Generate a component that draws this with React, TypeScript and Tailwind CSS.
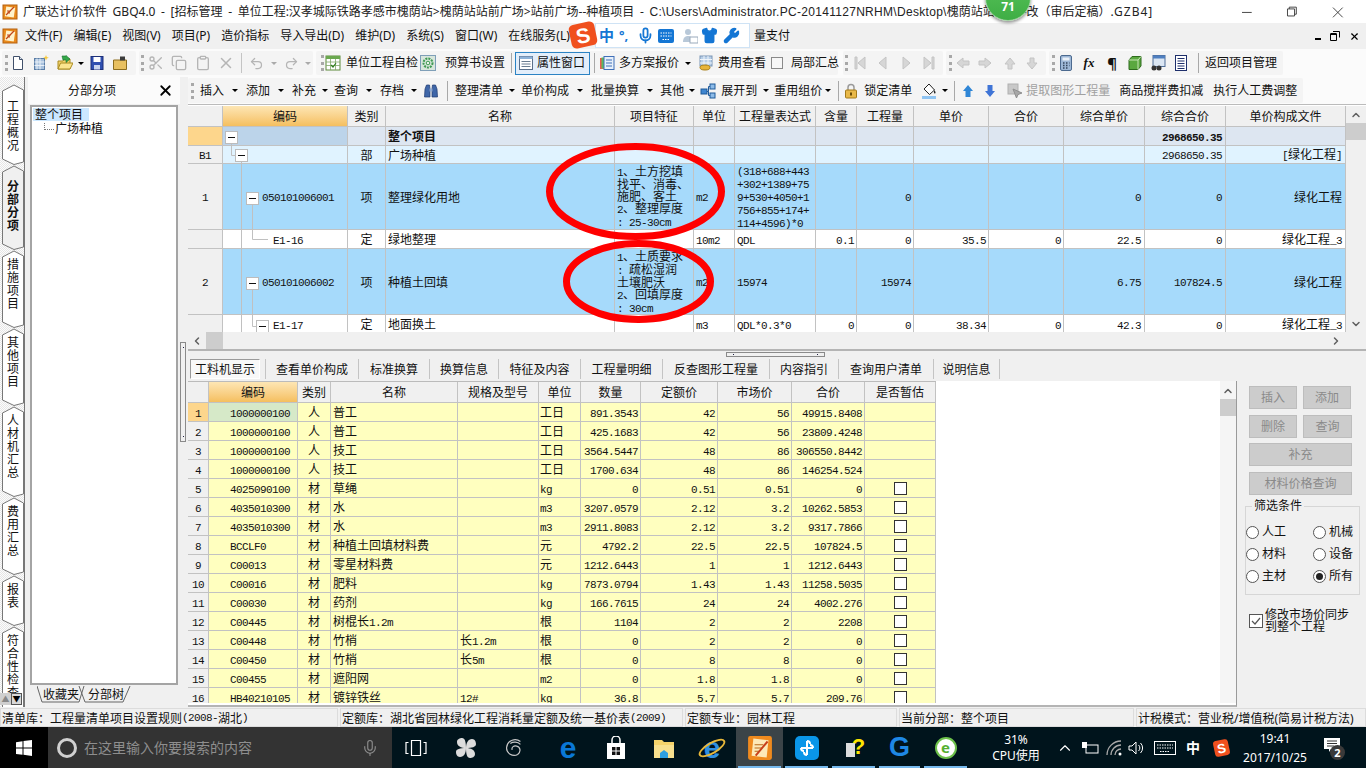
import { ChevronDown, ChevronLeft, ChevronRight, ChevronUp, Copy, Clipboard, Mic, Redo2, Scissors, Undo2, Wrench, Shirt, X } from "lucide-react";

const UPPER_COLS = "grid grid-cols-[35px_125px_38px_229px_79px_41px_81px_41px_57px_75px_75px_81px_81px_120px]";
const LOWER_COLS = "grid grid-cols-[21px_89px_33px_127px_81px_42px_60px_77px_74px_73px_71px]";
const LINE = "border-r border-b border-[#c2c2c2]";
const MONO = "font-['Liberation_Mono',monospace] text-[11px] tracking-[-0.6px]";

// digits and latin letters are narrower than the CJK glyphs in the original grid
function T({ s }: { s: string }) {
  return (
    <>
      {s.split(/([\x20-\x7e]+)/).map((p, i) =>
        /[\x20-\x7e]/.test(p) ? (
          <span key={i} className={MONO}>
            {p}
          </span>
        ) : (
          p
        )
      )}
    </>
  );
}

const upperAlign = ["justify-center", "justify-start", "justify-center", "justify-start", "justify-start", "justify-start", "justify-start", "justify-end pr-[2px]", "justify-end pr-[2px]", "justify-end pr-[2px]", "justify-end pr-[2px]", "justify-end pr-[3px]", "justify-end pr-[3px]", "justify-end pr-[3px]"];

const upperRows = [
  { h: "h-[19px]", bg: "bg-[#dde6f1]", head: "bg-[#fdd68c]", code: "bg-[#bcd4ea]", bold: true, cells: ["", "", "", "整个项目", "", "", "", "", "", "", "", "", "2968650.35", ""] },
  { h: "h-[18px]", bg: "bg-[#e0f3ff]", head: "bg-[#f0f0f0]", code: "", bold: false, cells: ["B1", "", "部", "广场种植", "", "", "", "", "", "", "", "", "2968650.35", "[绿化工程]"] },
  { h: "h-[66px]", bg: "bg-[#a6dafb]", head: "bg-[#f0f0f0]", code: "", bold: false, cells: ["1", "050101006001", "项", "整理绿化用地", "1、土方挖填|找平、消毒、|施肥、客土|2、整理厚度|: 25-30cm", "m2", "(318+688+443|+302+1389+75|9+530+4050+1|756+855+174+|114+4596)*0", "", "0", "", "", "0", "0", "绿化工程"] },
  { h: "h-[19px]", bg: "bg-white", head: "bg-[#f0f0f0]", code: "", bold: false, cells: ["", "E1-16", "定", "绿地整理", "", "10m2", "QDL", "0.1", "0", "35.5", "0", "22.5", "0", "绿化工程_3"] },
  { h: "h-[66px]", bg: "bg-[#a6dafb]", head: "bg-[#f0f0f0]", code: "", bold: false, cells: ["2", "050101006002", "项", "种植土回填", "1、土质要求|: 疏松湿润|土壤肥沃|2、回填厚度|: 30cm", "m2", "15974", "", "15974", "", "", "6.75", "107824.5", "绿化工程"] },
  { h: "h-[19px]", bg: "bg-white", head: "bg-[#f0f0f0]", code: "", bold: false, cells: ["", "E1-17", "定", "地面换土", "", "m3", "QDL*0.3*0", "0", "0", "38.34", "0", "42.3", "0", "绿化工程_3"] },
];

const lowerRows = [
  ["1", "1000000100", "人", "普工", "", "工日", "891.3543", "42", "56", "49915.8408", ""],
  ["2", "1000000100", "人", "普工", "", "工日", "425.1683", "42", "56", "23809.4248", ""],
  ["3", "1000000100", "人", "技工", "", "工日", "3564.5447", "48", "86", "306550.8442", ""],
  ["4", "1000000100", "人", "技工", "", "工日", "1700.634", "48", "86", "146254.524", ""],
  ["5", "4025090100", "材", "草绳", "", "kg", "0", "0.51", "0.51", "0", "box"],
  ["6", "4035010300", "材", "水", "", "m3", "3207.0579", "2.12", "3.2", "10262.5853", "box"],
  ["7", "4035010300", "材", "水", "", "m3", "2911.8083", "2.12", "3.2", "9317.7866", "box"],
  ["8", "BCCLF0", "材", "种植土回填材料费", "", "元", "4792.2", "22.5", "22.5", "107824.5", "box"],
  ["9", "C00013", "材", "零星材料费", "", "元", "1212.6443", "1", "1", "1212.6443", "box"],
  ["10", "C00016", "材", "肥料", "", "kg", "7873.0794", "1.43", "1.43", "11258.5035", "box"],
  ["11", "C00030", "材", "药剂", "", "kg", "166.7615", "24", "24", "4002.276", "box"],
  ["12", "C00445", "材", "树棍长1.2m", "", "根", "1104", "2", "2", "2208", "box"],
  ["13", "C00448", "材", "竹梢", "长1.2m", "根", "0", "2", "2", "0", "box"],
  ["14", "C00450", "材", "竹梢", "长5m", "根", "0", "8", "8", "0", "box"],
  ["15", "C00455", "材", "遮阳网", "", "m2", "0", "1.8", "1.8", "0", "box"],
  ["16", "HB40210105", "材", "镀锌铁丝", "12#", "kg", "36.8", "5.7", "5.7", "209.76", "box"],
];

const leftTabs = [
  { label: "工程概况", h: "h-[81px]", n: 81, pt: "pt-[16px]" },
  { label: "分部分项", h: "h-[85px]", n: 85, pt: "pt-[15px]", active: true },
  { label: "措施项目", h: "h-[78px]", n: 78, pt: "pt-[8px]" },
  { label: "其他项目", h: "h-[78px]", n: 78, pt: "pt-[8px]" },
  { label: "人材机汇总", h: "h-[91px]", n: 91, pt: "pt-[8px]" },
  { label: "费用汇总", h: "h-[78px]", n: 78, pt: "pt-[8px]" },
  { label: "报表", h: "h-[51px]", n: 51, pt: "pt-[8px]" },
  { label: "符合性检查", h: "h-[90px]", n: 90, pt: "pt-[8px]" },
];

function Grip() {
  return <span className="h-[16px] w-[3px] shrink-0 border-l-[3px] border-dotted border-[#a8a8a8]" />;
}
function Sep() {
  return <span className="h-[20px] w-px shrink-0 bg-[#a8a8a8]" />;
}
function Caret({ w }: { w: string }) {
  return (
    <span className={`flex shrink-0 justify-center ${w}`}>
      <span className="h-0 w-0 border-x-[3px] border-t-[3px] border-x-transparent border-t-black" />
    </span>
  );
}
function Drop({ label, w }: { label: string; w: string }) {
  return (
    <>
      <span className="shrink-0">{label}</span>
      <Caret w={w} />
    </>
  );
}

function Svg({ children, className = "" }: { children: React.ReactNode; className?: string }) {
  return (
    <svg viewBox="0 0 16 16" className={`h-[16px] w-[16px] shrink-0 ${className}`}>
      {children}
    </svg>
  );
}

function AppLogo() {
  return (
    <Svg>
      <rect x="1" y="1" width="14" height="14" fill="#e98a1c" stroke="#b5600f" />
      <rect x="3.5" y="3" width="9" height="10" fill="#fff3cc" transform="rotate(8 8 8)" />
      <path d="M4 11 L12 3 M5 7h4M5 9h3" stroke="#c0461a" strokeWidth="1.2" />
    </Svg>
  );
}
const NewDoc = () => (
  <Svg className="-ml-[5px]">
    <path d="M3.5 1.5h6l3 3v10h-9z" fill="#fff" stroke="#40506a" />
    <path d="M9.5 1.5v3h3" fill="#dfe8f2" stroke="#40506a" />
  </Svg>
);
const NewDoc2 = () => (
  <Svg>
    <rect x="1.5" y="3.5" width="10" height="11" fill="#a9c2de" stroke="#5a7da6" />
    <path d="M4 3.5v11M7 3.5v11M1.5 7h10M1.5 10.5h10" stroke="#eaf1f8" />
    <path d="M13 0l.8 2 2 .8-2 .8-.8 2-.8-2-2-.8 2-.8z" fill="#f7c93e" />
  </Svg>
);
const OpenFolder = () => (
  <Svg className="ml-px">
    <path d="M1 6h5l1-2h6v10H1z" fill="#f3d36b" stroke="#a98a20" />
    <path d="M1 14l2.5-6H16l-3 6z" fill="#fbe58e" stroke="#a98a20" />
    <path d="M5 1h4v-.5l4 3.500-4 3.500V5H6z" fill="#34a84a" stroke="#1a6f2c" strokeWidth=".6" />
  </Svg>
);
const SaveIcon = () => (
  <Svg>
    <rect x="2" y="1.5" width="12" height="13" fill="#2f4fb0" stroke="#1c2f78" />
    <rect x="4.5" y="2" width="7" height="5" fill="#fff" />
    <rect x="5" y="10" width="6" height="4.5" fill="#c9d4ee" />
  </Svg>
);
const DocFolder = () => (
  <Svg>
    <path d="M1.5 5h13v9.5h-13z" fill="#e8c060" stroke="#8d6d1e" />
    <path d="M8 1.5h5v4H8z" fill="#3b3b3b" />
  </Svg>
);
const SheetIcon = () => (
  <Svg>
    <rect x="1" y="1" width="14" height="14" fill="#fff" stroke="#5c8a3a" />
    <rect x="1" y="1" width="14" height="3" fill="#6aa84f" />
    <path d="M1 7h14M1 10.5h14M5.5 4v11M10.5 4v11" stroke="#7fa868" strokeWidth=".8" />
    <path d="M6 10l2 2 3-4" stroke="#2f7d1e" strokeWidth="1.2" fill="none" />
  </Svg>
);
const GearIcon = () => (
  <Svg>
    <rect x=".5" y=".5" width="15" height="15" fill="#d8e6dc" stroke="#7f9fb8" />
    <circle cx="8" cy="8" r="4.5" fill="none" stroke="#3f9a52" strokeWidth="2" strokeDasharray="2 1" />
    <circle cx="8" cy="8" r="1.8" fill="#e9f3ea" stroke="#3f9a52" />
  </Svg>
);
const PropIcon = () => (
  <Svg>
    <rect x="1.5" y="1.5" width="13" height="13" fill="#fff" stroke="#5a6f8a" />
    <rect x="1.5" y="1.5" width="13" height="2.5" fill="#8db2d8" />
    <path d="M3.5 6.5h9M3.5 9h9M3.5 11.5h9" stroke="#6b7d90" />
  </Svg>
);
const MultiIcon = () => (
  <Svg>
    <rect x="1" y="3" width="5" height="11" fill="#e85a4f" />
    <rect x="2.5" y="2.5" width="5" height="11" fill="#5db85c" />
    <rect x="5" y="1.5" width="10" height="13" fill="#e6effa" stroke="#3f6fb8" />
    <path d="M7 5h6M7 8h6M7 11h6" stroke="#3f6fb8" />
  </Svg>
);
const CostIcon = () => (
  <Svg>
    <rect x="2" y="1" width="12" height="10" fill="#b8cfe8" stroke="#7a95b5" />
    <path d="M2 4.5h12M2 8h12M6 1v10M10 1v10" stroke="#eef4fa" />
    <ellipse cx="7" cy="12.5" rx="5" ry="2.5" fill="#e8b53a" stroke="#a87d14" />
  </Svg>
);
const Nav = ({ d, className }: { d: string; className?: string }) => (
  <Svg className={className}>
    <path d={d} fill="#d6d6d6" stroke="#c4c4c4" />
  </Svg>
);
const Calc = () => (
  <Svg className="-ml-[4px]">
    <rect x="2.5" y=".5" width="11" height="15" rx="1.5" fill="#9db7d6" stroke="#4c6a8f" />
    <rect x="4.5" y="2.5" width="7" height="3" fill="#e9f0f8" />
    <path d="M5 8h1.5M8 8h1.5M11 8h.5M5 10.5h1.5M8 10.5h1.5M11 10.5h.5M5 13h1.5M8 13h1.5" stroke="#34465e" strokeWidth="1.4" />
  </Svg>
);
const Cube = () => (
  <Svg>
    <path d="M2 5l3-3.5h9V11l-3 3.5H2z" fill="#5aa83f" stroke="#2e6b1e" />
    <path d="M2 5h9v9.5M11 5l3-3.5" fill="none" stroke="#c7e6b6" />
  </Svg>
);
const FormIcon = () => (
  <Svg>
    <rect x="3" y=".5" width="12" height="11" fill="#dbe6f3" stroke="#4f6d96" />
    <rect x="3" y=".5" width="12" height="3" fill="#4f7fc0" />
    <circle cx="4" cy="13" r="2.5" fill="#333" />
    <circle cx="9" cy="13" r="2.5" fill="#333" />
  </Svg>
);
const ListIcon = () => (
  <Svg>
    <rect x="2.5" y=".5" width="11" height="15" fill="#fff" stroke="#1e2f6b" />
    <path d="M4.5 3.5h7M4.5 6h7M4.5 8.500h7M4.500 11h7M4.500 13.500h7" stroke="#1e2f6b" />
  </Svg>
);
const Binoculars = () => (
  <Svg>
    <path d="M2 6l1.500-4h3L7 6v8H1.500zM14 6l-1.500-4h-3L9 6v8h5.500z" fill="#3f66a8" stroke="#1e3a70" strokeWidth=".7" />
    <rect x="6.500" y="5.500" width="3" height="3" fill="#8fa9d0" />
  </Svg>
);
const TreeIcon = () => (
  <Svg>
    <rect x="1" y="6" width="6" height="5" fill="#3f86d0" stroke="#1f5a9a" />
    <rect x="10" y="1" width="5" height="5" fill="#8dbbe8" stroke="#1f5a9a" />
    <rect x="10" y="10" width="5" height="5" fill="#8dbbe8" stroke="#1f5a9a" />
    <path d="M7 8.500h1.500V3.500H10M8.500 8.500v4H10" stroke="#1f5a9a" fill="none" />
  </Svg>
);
const LockIcon = () => (
  <Svg>
    <path d="M5 7V4.500a3 3 0 016 0V7" fill="none" stroke="#9a9a9a" strokeWidth="1.500" />
    <rect x="2.500" y="7" width="11" height="8" rx="1" fill="#e9b949" stroke="#a37a1a" />
    <rect x="7" y="9.500" width="2" height="3" fill="#6b4d08" />
  </Svg>
);
const PaintIcon = () => (
  <Svg>
    <path d="M8 1l5.500 6-5 4.500L3 6z" fill="#fff" stroke="#222" />
    <path d="M13.500 7c1 2 1.500 3 .5 3.500S12.500 9 13.500 7z" fill="#222" />
    <rect x="1" y="13" width="14" height="3" fill="#8fc4f2" />
  </Svg>
);
const BlueArrow = ({ down }: { down?: boolean }) => (
  <Svg>
    <path d={down ? "M5.500 2h5v6H13l-5 6-5-6h2.500z" : "M8 2l5 6h-2.500v6h-5V8H3z"} fill={down ? "#3f74d6" : "#2f86d6"} />
  </Svg>
);
const Extract = () => (
  <Svg>
    <rect x="1" y="1" width="10" height="10" fill="#c8c8c8" stroke="#b0b0b0" />
    <path d="M6 6l9 4-4 1.500L9.500 15z" fill="#a8a8a8" stroke="#8f8f8f" />
  </Svg>
);

function TitleBar() {
  return (
    <div className="flex h-[23px] items-center bg-white pl-[2px] text-[12px] text-[#222]">
      <AppLogo />
      <div className="ml-[5px] flex w-[1160px] shrink-0 overflow-hidden whitespace-nowrap">
        <span className="shrink-0 whitespace-pre [word-spacing:2.5px]">广联达计价软件 GBQ4.0 - [招标管理 - 单位工程:汉孝城际铁路孝感市槐荫站&gt;槐荫站站前广场&gt;站前广场--种植项目 - </span>
        <span className="shrink-0 font-['Liberation_Sans','Noto_Sans_CJK_SC',sans-serif] tracking-[0.3px]">C:\Users\Administrator.PC-20141127NRHM\Desktop\</span>
        <span className="shrink-0">槐荫站站前广--改（审后定稿）</span>
        <span className="shrink-0 tracking-[1px]">.GZB4]</span>
      </div>
      <svg viewBox="0 0 120 16" className="ml-auto mr-[18px] h-[16px] w-[106px]">
        <path d="M0 8.500h11" stroke="#333" />
        <path d="M51.500 4.500h8v8h-8zM53.500 4.500v-2h8v8h-2" fill="none" stroke="#333" />
        <path d="M103 3l11 11M114 3l-11 11" stroke="#333" />
      </svg>
    </div>
  );
}

function MenuBar() {
  const items = ["文件(F)", "编辑(E)", "视图(V)", "项目(P)", "造价指标", "导入导出(D)", "维护(D)", "系统(S)", "窗口(W)", "在线服务(L)"];
  return (
    <div className="flex h-[26px] items-center bg-[#f0f0f0] pl-[2px] text-[12px] text-[#111]">
      <AppLogo />
      <div className="ml-[7px] flex w-[765px] shrink-0 gap-[11px]">
        {items.map((m) => (
          <span key={m} className="whitespace-nowrap">
            {m}
          </span>
        ))}
        <span className="ml-auto">量支付</span>
      </div>
      <div className="ml-auto mr-[6px] flex items-center gap-[9px]">
        <span className="h-[2px] w-[6px] translate-y-[3px] bg-black" />
        <svg viewBox="0 0 10 10" className="h-[10px] w-[10px]">
          <path d="M3 .500h6.500v6M.500 3h6v6.500h-6z" fill="none" stroke="#000" />
          <path d="M.5 3h6" stroke="#000" strokeWidth="2" />
        </svg>
        <X size={11} strokeWidth={2.500} className="text-black" />
      </div>
    </div>
  );
}

function ToolbarOne() {
  const gray = "shrink-0 text-[#b5b5b5]";
  return (
    <div className="flex h-[28px] items-center gap-[3px] bg-[#fbfbfb] pl-[2px] text-[12px] text-[#111]">
      <div className="flex h-[24px] w-[134px] items-center gap-[7px] rounded-[2px] bg-[#f4f4f4] pl-[3px]">
        <Grip />
        <NewDoc />
        <NewDoc2 />
        <OpenFolder />
        <Caret w="w-[8px] -mx-[3px]" />
        <SaveIcon />
        <DocFolder />
      </div>
      <div className="flex h-[24px] w-[174px] items-center rounded-[2px] bg-[#f4f4f4] pl-[2px]">
        <Grip />
        <Scissors size={16} className={`ml-[4px] ${gray}`} />
        <Copy size={16} className={`ml-[7px] ${gray}`} />
        <Clipboard size={16} className={`ml-[8px] ${gray}`} />
        <X size={18} className={`ml-[6px] ${gray}`} />
        <span className="ml-[6px] h-[20px] w-px bg-[#c4c4c4]" />
        <Undo2 size={15} className={`ml-[7px] ${gray}`} />
        <span className="ml-[7px] h-0 w-0 border-x-[3px] border-t-[3px] border-x-transparent border-t-[#aaa]" />
        <Redo2 size={15} className={`ml-[7px] ${gray}`} />
        <span className="ml-[6px] h-0 w-0 border-x-[3px] border-t-[3px] border-x-transparent border-t-[#aaa]" />
      </div>
      <div className="flex h-[24px] w-[522px] items-center whitespace-nowrap rounded-[2px] bg-[#f4f4f4] pl-[5px]">
        <Grip />
        <span className="ml-[1px]" />
        <SheetIcon />
        <span className="ml-[5px]">单位工程自检</span>
        <span className="ml-[2px]" />
        <GearIcon />
        <span className="ml-[9px]">预算书设置</span>
        <span className="ml-[6px]" />
        <Sep />
        <div className="ml-[3px] flex h-[23px] w-[75px] shrink-0 items-center border border-[#2b83c4] bg-[#e3eefa] pl-[2px]">
          <PropIcon />
          <span className="ml-[3px]">属性窗口</span>
        </div>
        <span className="ml-[4px]" />
        <Sep />
        <span className="ml-[4px]" />
        <MultiIcon />
        <span className="ml-[4px]">多方案报价</span>
        <Caret w="w-[18px]" />
        <span className="ml-[1px]" />
        <CostIcon />
        <span className="ml-[4px]">费用查看</span>
        <span className="ml-[5px] h-[12px] w-[12px] shrink-0 border border-[#8a8a8a] bg-[#f7f7f7]" />
        <span className="ml-[8px]">局部汇总</span>
      </div>
      <div className="ml-[2px] flex h-[24px] w-[100px] items-center gap-[7px] rounded-[2px] bg-[#f4f4f4] pl-[2px]">
        <Grip />
        <Nav d="M3 2h2v12H3zM13 2v12L6 8z" className="-ml-[3px]" />
        <Nav d="M11 2v12L4 8z" />
        <Nav d="M5 2v12l7-6z" />
        <Nav d="M3 2v12l7-6zM11 2h2v12h-2z" />
      </div>
      <div className="flex h-[24px] w-[100px] items-center gap-[6px] rounded-[2px] bg-[#f4f4f4] pl-[3px]">
        <Grip />
        <Nav d="M2 8l6-5v3h6v4H8v3z" className="-ml-[3px]" />
        <Nav d="M14 8L8 3v3H2v4h6v3z" />
        <Nav d="M8 3l5 6h-3v5H6V9H3z" className="ml-[3px]" />
        <Nav d="M8 14l5-6h-3V3H6v5H3z" />
      </div>
      <div className="flex h-[24px] w-[234px] items-center gap-[7px] rounded-[2px] bg-[#f4f4f4] pl-[3px]">
        <Grip />
        <Calc />
        <span className="flex w-[16px] shrink-0 justify-center font-['Liberation_Serif',serif] text-[13px] font-bold italic">fx</span>
        <span className="flex w-[16px] shrink-0 justify-center text-[15px] font-bold">¶</span>
        <Cube />
        <FormIcon />
        <ListIcon />
        <span className="ml-[2px] h-[20px] w-px shrink-0 bg-[#a8a8a8]" />
        <span className="-ml-[1px] whitespace-nowrap">返回项目管理</span>
      </div>
    </div>
  );
}

function ToolbarTwo() {
  return (
    <div className="flex h-[27px] items-center bg-[#fbfbfb] text-[12px] text-[#111]">
      <div className="flex h-[25px] w-[1115px] items-center whitespace-nowrap rounded-[2px] bg-[#f4f4f4] pl-[3px]">
        <Grip />
        <span className="ml-[6px]" />
        <Drop label="插入" w="w-[22px]" />
        <Drop label="添加" w="w-[22px]" />
        <Drop label="补充" w="w-[18px]" />
        <Drop label="查询" w="w-[22px]" />
        <Drop label="存档" w="w-[19px]" />
        <Binoculars />
        <span className="ml-[8px]" />
        <Sep />
        <span className="ml-[7px]" />
        <Drop label="整理清单" w="w-[18px]" />
        <Drop label="单价构成" w="w-[22px]" />
        <Drop label="批量换算" w="w-[21px]" />
        <Drop label="其他" w="w-[16px]" />
        <TreeIcon />
        <span className="ml-[5px]" />
        <Drop label="展开到" w="w-[17px]" />
        <Drop label="重用组价" w="w-[12px]" />
        <span className="ml-[4px]" />
        <Sep />
        <span className="ml-[4px]" />
        <LockIcon />
        <span className="ml-[5px]">锁定清单</span>
        <span className="ml-[9px]" />
        <PaintIcon />
        <Caret w="w-[16px]" />
        <span className="ml-[1px]" />
        <Sep />
        <span className="ml-[5px]" />
        <BlueArrow />
        <span className="ml-[6px]" />
        <BlueArrow down />
        <span className="ml-[9px]" />
        <Extract />
        <span className="ml-[3px] text-[#a0a0a0]">提取图形工程量</span>
        <span className="ml-[9px]">商品搅拌费扣减</span>
        <span className="ml-[10px]">执行人工费调整</span>
      </div>
    </div>
  );
}

function LeftPanel() {
  return (
    <div className="relative flex h-[630px] w-[188px] shrink-0 overflow-hidden bg-[#f0f0f0] text-[12px] text-[#111]">
      <div className="w-[28px] shrink-0">
        <div className="flex h-full w-[25px] flex-col border-r border-[#777] bg-[repeating-conic-gradient(#e6e6e6_0_25%,#fcfcfc_0_50%)] bg-[length:2px_2px] pl-[2px] pt-[7px]">
          {leftTabs.map((t) => (
            <div key={t.label} className={`relative flex w-[22px] shrink-0 flex-col items-center leading-[13px] ${t.h} ${t.pt} ${t.active ? "font-bold" : ""}`}>
              <svg viewBox={`0 0 22 ${t.n}`} className="absolute left-0 top-0 h-full w-full">
                <path d={`M.5 7L12 1l9.500 5v${t.n - 9}L12 ${t.n - 0.5}.5 ${t.n - 6}z`} fill={t.active ? "#f0f0f0" : "#fff"} stroke="#777" />
              </svg>
              {t.label.split("").map((c, i) => (
                <span key={i} className="relative">
                  {c}
                </span>
              ))}
            </div>
          ))}
        </div>
      </div>
      <div className="flex w-[152px] shrink-0 flex-col">
        <div className="flex h-[27px] shrink-0 items-center bg-[#fbfbfb]">
          <span className="ml-[40px]">分部分项</span>
          <X size={17} strokeWidth={2.500} className="ml-[41px] text-black" />
        </div>
        <div className="ml-[2px] mt-[1px] h-[580px] w-[148px] shrink-0 border-2 border-[#a4a4a4] bg-white pl-[1px] pt-[1px]">
          <div className="w-[56px] bg-[#cce8ff] pl-[2px] leading-[13px]">整个项目</div>
          <div className="mt-[1px] flex items-center pl-[11px] leading-[13px]">
            <span className="mb-[4px] h-[7px] w-[10px] border-b border-l border-dotted border-[#777]" />
            <span className="ml-[1px]">广场种植</span>
          </div>
        </div>
        <div className="relative ml-[9px] mt-px flex h-[18px] w-[100px] pl-[6px] leading-[17px]">
          <svg viewBox="0 0 100 18" className="absolute left-0 top-0 h-[18px] w-[100px]">
            <path d="M0 0l5 16h37l5-16M42 0l6 16h38l7-16" fill="none" stroke="#666" />
          </svg>
          <span className="relative">收藏夹</span>
          <span className="relative ml-[9px]">分部树</span>
        </div>
      </div>
      <div className="flex w-[8px] shrink-0 items-center">
        <span className="flex h-[100px] w-[6px] flex-col items-center justify-between border border-[#8a8a8a] py-[4px]">
          <i className="h-px w-px bg-[#224]" />
          <i className="h-px w-px bg-[#224]" />
        </span>
      </div>
      <div className="absolute bottom-[2px] left-0 flex h-[12px]">
        <span className="flex h-full w-[11px] items-center justify-center bg-[#cfcfcf] text-[8px] text-[#888]">▲</span>
        <span className="flex h-full w-[11px] items-center justify-center border border-[#555] bg-[#d8d8d8] text-[8px] text-black">▼</span>
      </div>
    </div>
  );
}

function UpperGrid() {
  const head = ["", "编码", "类别", "名称", "项目特征", "单位", "工程量表达式", "含量", "工程量", "单价", "合价", "综合单价", "综合合价", "单价构成文件"];
  return (
    <div className="flex h-[245px] shrink-0 flex-col text-[12px] text-[#111]">
      <div className="flex h-[228px] shrink-0 border-t border-[#bbb] bg-white pt-px">
        <div className="relative h-[226px] w-[1158px] shrink-0 overflow-hidden">
          <div className={`${UPPER_COLS} h-[21px] bg-[#f0f0f0]`}>
            {head.map((h, i) => (
              <div key={i} className={`flex items-center justify-center pt-[2px] ${LINE} ${i === 1 ? "bg-gradient-to-b from-[#fde6b4] to-[#f5bf5e]" : ""}`}>
                {h}
              </div>
            ))}
          </div>
          {upperRows.map((r, ri) => (
            <div key={ri} className={`${UPPER_COLS} ${r.h} ${r.bg} ${r.bold ? "font-bold" : ""}`}>
              {r.cells.map((c, i) => {
                const bg = i === 0 ? r.head : i === 1 ? r.code : "";
                const pad = i === 1 ? (c.startsWith("E") ? "pl-[50px]" : "pl-[39px]") : i === 4 ? "pl-[2px]" : i === 3 ? "pl-[2px]" : i === 5 || i === 6 ? "pl-[2px]" : "";
                const parts = c.split("|");
                return (
                  <div key={i} className={`flex items-center overflow-hidden pt-[2px] ${LINE} ${bg} ${upperAlign[i]} ${pad}`}>
                    <div className="leading-[12px]">
                      {parts.map((p, k) => (
                        <div key={k} className={`whitespace-nowrap ${parts.length > 1 ? "" : "leading-[14px]"}`}>
                          <T s={p} />
                        </div>
                      ))}
                    </div>
                  </div>
                );
              })}
            </div>
          ))}
          {/* tree connectors of the code column */}
          <svg viewBox="0 0 1158 226" className="absolute left-0 top-0 h-[226px] w-[1158px]">
            <g fill="none" stroke="#c0c0c0">
              <path d="M43.500 38v11.500H47M53.500 56v170M64.500 98v35.500H80M64.500 183v37.500H68" />
            </g>
            {[
              [37, 25],
              [47, 43],
              [58, 86],
              [58, 171],
              [68, 214],
            ].map(([x, y], i) => (
              <g key={i}>
                <rect x={x + 0.5} y={y + 0.5} width="12" height="12" fill="#fff" stroke="#bcbcbc" />
                <path d={`M${x + 3} ${y + 6.500}h7`} stroke="#111" />
              </g>
            ))}
          </svg>
        </div>
        <div className="flex h-[226px] w-[20px] shrink-0 flex-col items-center bg-[#f0f0f0] pt-[3px]">
          <ChevronUp size={12} strokeWidth={3} className="text-[#606060]" />
          <span className="mt-[2px] h-[17px] w-full bg-[#cdcdcd]" />
          <ChevronDown size={12} strokeWidth={3} className="mt-auto mb-[2px] text-[#606060]" />
        </div>
      </div>
      <div className="flex h-[17px] shrink-0 items-center bg-[#f0f0f0]">
        <ChevronLeft size={12} strokeWidth={3} className="ml-[3px] text-[#606060]" />
        <span className="ml-[3px] h-full w-[17px] bg-[#cdcdcd]" />
        <ChevronRight size={12} strokeWidth={3} className="ml-auto mr-[24px] text-[#606060]" />
      </div>
    </div>
  );
}

function BottomTabs() {
  const tabs = [
    { t: "查看单价构成", w: "w-[93px]" },
    { t: "标准换算", w: "w-[71px]" },
    { t: "换算信息", w: "w-[69px]" },
    { t: "特征及内容", w: "w-[82px]" },
    { t: "工程量明细", w: "w-[82px]" },
    { t: "反查图形工程量", w: "w-[107px]" },
    { t: "内容指引", w: "w-[69px]" },
    { t: "查询用户清单", w: "w-[95px]" },
    { t: "说明信息", w: "w-[66px]" },
  ];
  return (
    <div className="flex h-[32px] shrink-0 flex-col bg-[#f0f0f0] text-[12px] text-[#111]">
      <div className="h-[9px] shrink-0 border-t-2 border-[#b4b4b4]">
        <div className="ml-[538px] mt-[1px] flex h-[5px] w-[99px] items-center justify-between border border-[#8a8a8a] px-[6px]">
          <i className="h-px w-px bg-[#224]" />
          <i className="h-px w-px bg-[#224]" />
        </div>
      </div>
      <div className="flex h-[23px] items-start pl-[2px] pt-px">
        <div className="flex h-[20px] w-[70px] shrink-0 items-center justify-center border border-[#9a9a9a] border-b-white border-r-white bg-[#f8f8f8] pt-[2px]">工料机显示</div>
        <span className="ml-[5px] h-[20px] w-px shrink-0 bg-[#c4c4c4]" />
        {tabs.map((x) => (
          <div key={x.t} className={`flex h-[20px] shrink-0 items-center justify-center border-r border-[#c4c4c4] pt-[2px] ${x.w}`}>
            {x.t}
          </div>
        ))}
      </div>
    </div>
  );
}

function LowerGrid() {
  const head = ["", "编码", "类别", "名称", "规格及型号", "单位", "数量", "定额价", "市场价", "合价", "是否暂估"];
  const cellAlign = ["justify-center", "justify-start pl-[21px]", "justify-center", "justify-start pl-[2px]", "justify-start pl-[2px]", "justify-start pl-px", "justify-end pr-[2px]", "justify-end pr-[2px]", "justify-end pr-[2px]", "justify-end pr-[2px]", "justify-center"];
  return (
    <div className="flex h-[326px] w-[1049px] shrink-0 border-b-2 border-r border-b-[#b4b4b4] border-r-[#9a9a9a] bg-white text-[12px] text-[#111]">
      <div className="h-[322px] w-[748px] shrink-0 overflow-hidden border-t border-[#bbb]">
        <div className={`${LOWER_COLS} h-[21px] bg-[#f0f0f0]`}>
          {head.map((h, i) => (
            <div key={i} className={`flex items-center justify-center whitespace-nowrap pt-[2px] ${LINE} ${i === 1 ? "bg-gradient-to-b from-[#fde6b4] to-[#f5bf5e]" : ""}`}>
              {h}
            </div>
          ))}
        </div>
        {lowerRows.map((r, ri) => (
          <div key={ri} className={`${LOWER_COLS} h-[19px] bg-[#ffffbf]`}>
            {r.map((c, i) => (
              <div key={i} className={`flex items-center overflow-hidden whitespace-nowrap ${LINE} ${cellAlign[i]} ${i === 0 ? (ri === 0 ? "bg-[#fdd68c]" : "bg-[#f0f0f0]") : ""} ${i === 1 && ri === 0 ? "bg-[#d6e9c8]" : ""}`}>
                {c === "box" ? <span className="h-[13px] w-[13px] border border-[#333] bg-white" /> : <span className="pt-[2px]"><T s={c} /></span>}
              </div>
            ))}
          </div>
        ))}
      </div>
      <div className="ml-auto flex h-[322px] w-[16px] shrink-0 flex-col items-center bg-[#f5f5f5] pt-[4px]">
        <ChevronUp size={12} strokeWidth={3} className="text-[#606060]" />
        <span className="mt-[2px] h-[17px] w-full bg-[#cdcdcd]" />
      </div>
    </div>
  );
}

function Radio({ label, on }: { label: string; on?: boolean }) {
  return (
    <div className="flex h-[22px] items-center">
      <span className="flex h-[13px] w-[13px] shrink-0 items-center justify-center rounded-full border border-[#555] bg-white">
        {on && <span className="h-[7px] w-[7px] rounded-full bg-[#222]" />}
      </span>
      <span className="ml-[3px]">{label}</span>
    </div>
  );
}

function SideButton({ label, w }: { label: string; w: string }) {
  return <div className={`flex h-[23px] items-center justify-center border border-[#bdbdbd] bg-[#cccccc] text-[#8a8a8a] ${w}`}>{label}</div>;
}

function SidePanel() {
  return (
    <div className="flex h-[326px] w-[129px] shrink-0 flex-col bg-[#f0f0f0] pl-[12px] pt-[5px] text-[12px] text-[#111]">
      <div className="flex gap-[6px]">
        <SideButton label="插入" w="w-[48px]" />
        <SideButton label="添加" w="w-[48px]" />
      </div>
      <div className="mt-[6px] flex gap-[6px]">
        <SideButton label="删除" w="w-[48px]" />
        <SideButton label="查询" w="w-[49px]" />
      </div>
      <div className="mt-[5px]">
        <SideButton label="补充" w="w-[103px]" />
      </div>
      <div className="mt-[6px]">
        <SideButton label="材料价格查询" w="w-[103px]" />
      </div>
      <div className="relative -ml-[4px] mt-[11px] h-[89px] w-[115px] shrink-0 border border-[#d6d6d6] pt-[14px]">
        <span className="absolute -top-[8px] left-[6px] bg-[#f0f0f0] px-[2px] leading-[14px]">筛选条件</span>
        <div className="grid grid-cols-[67px_48px]">
          <Radio label="人工" />
          <Radio label="机械" />
          <Radio label="材料" />
          <Radio label="设备" />
          <Radio label="主材" />
          <Radio label="所有" on />
        </div>
      </div>
      <div className="mt-[14px] flex items-center">
        <span className="flex h-[14px] w-[14px] shrink-0 items-center justify-center border border-[#555] bg-white">
          <svg viewBox="0 0 12 12" className="h-[12px] w-[12px]">
            <path d="M2 6l3 3 5-6" fill="none" stroke="#555" strokeWidth="1.200" />
          </svg>
        </span>
        <span className="ml-[2px] leading-[12px]">
          修改市场价同步
          <br />
          到整个工程
        </span>
      </div>
    </div>
  );
}

function StatusBar() {
  const segs = [
    { w: "w-[338px]", a: "清单库：", b: "工程量清单项目设置规则", c: "(2008-湖北)" },
    { w: "w-[343px]", a: "定额库：", b: "湖北省园林绿化工程消耗量定额及统一基价表", c: "(2009)" },
    { w: "w-[212px]", a: "定额专业：", b: "园林工程", c: "" },
    { w: "w-[235px]", a: "当前分部：", b: "整个项目", c: "" },
    { w: "w-[230px]", a: "计税模式：", b: "营业税/增值税(简易计税方法)", c: "" },
  ];
  return (
    <div className="mt-px flex h-[19px] shrink-0 gap-[2px] bg-[#f0f0f0] text-[12px] text-[#111]">
      {segs.map((s) => (
        <div key={s.a} className={`flex shrink-0 items-center overflow-hidden whitespace-nowrap border border-[#dcdcdc] pl-px pt-[2px] ${s.w}`}>
          <span>{s.a}</span>
          <span>{s.b}</span>
          {s.c && <T s={s.c} />}
        </div>
      ))}
    </div>
  );
}

function TaskIcon({ children, active, line, className = "w-[48px]" }: { children: React.ReactNode; active?: boolean; line?: boolean; className?: string }) {
  return (
    <div className={`relative flex h-[41px] shrink-0 items-center justify-center ${className} ${active ? "bg-[#3b4448]" : ""}`}>
      {children}
      {line && <span className="absolute bottom-0 left-[2px] right-[2px] h-[2px] bg-[#76b9ed]" />}
    </div>
  );
}

function Taskbar() {
  return (
    <div className="flex h-[41px] shrink-0 items-center bg-[#00141c] text-[12px] text-white">
      <div className="flex h-full w-[48px] shrink-0 items-center justify-center bg-black">
        <svg viewBox="0 0 16 16" className="h-[16px] w-[16px]">
          <path d="M0 2.200L6.500 1.300v6.300H0zM7.500 1.100L16 0v7.600H7.500zM0 8.500h6.500v6.300L0 13.900zM7.500 8.500H16V16l-8.500-1.200z" fill="#fff" />
        </svg>
      </div>
      <div className="flex h-full w-[344px] shrink-0 items-center bg-[#333333] pl-[9px]">
        <span className="h-[20px] w-[20px] shrink-0 rounded-full border-[3px] border-[#d0d0d0]" />
        <span className="ml-[7px] text-[14px] leading-none text-[#8e8e8e]">在这里输入你要搜索的内容</span>
        <Mic size={18} strokeWidth={1.500} className="ml-auto mr-[13px] text-[#8e8e8e]" />
      </div>
      <div className="flex items-center">
        <TaskIcon>
          <svg viewBox="0 0 22 18" className="h-[18px] w-[22px]">
            <path d="M6.500 1.500h9v15h-9zM3.500 3.500h-2.500v11h2.500M18.500 3.500h2.500v11h-2.500" fill="none" stroke="#fff" strokeWidth="1.200" />
          </svg>
        </TaskIcon>
        <TaskIcon className="ml-[2px] w-[48px]">
          <svg viewBox="0 0 24 24" className="h-[24px] w-[24px]">
            <path d="M12 12C7 12 3 10 3 6c0-3 3-4 5-4 3 0 4 4 4 10zM12 12c0-5 2-9 6-9 3 0 4 3 4 5 0 3-4 4-10 4zM12 12c5 0 9 2 9 6 0 3-3 4-5 4-3 0-4-4-4-10zM12 12c0 5-2 9-6 9-3 0-4-3-4-5 0-3 4-4 10-4z" fill="#dcdcdc" />
          </svg>
        </TaskIcon>
        <TaskIcon>
          <svg viewBox="0 0 24 24" className="h-[22px] w-[22px]">
            <path d="M19 5C14 1 5 3 4 11c-1 7 7 11 12 8 4-3 3-8-1-9-3-1-6 1-5 4M8 7c3-2 8-2 11 1" fill="none" stroke="#c8c8c8" strokeWidth="1.300" />
          </svg>
        </TaskIcon>
        <TaskIcon className="ml-[6px] w-[48px]">
          <span className="font-['Liberation_Sans',sans-serif] text-[30px] font-bold leading-none text-[#0a78d7]">e</span>
        </TaskIcon>
        <TaskIcon>
          <svg viewBox="0 0 22 24" className="h-[24px] w-[22px]">
            <path d="M2 7h18v16H2z" fill="#fff" />
            <path d="M7 7V4a4 4 0 018 0v3" fill="none" stroke="#fff" strokeWidth="1.500" />
            <path d="M7 11h3.500v3.500H7zM11.500 11H15v3.500h-3.500zM7 15.500h3.500V19H7zM11.500 15.500H15V19h-3.500z" fill="#111" />
          </svg>
        </TaskIcon>
        <TaskIcon>
          <svg viewBox="0 0 24 24" className="h-[24px] w-[24px]">
            <path d="M2 4h8l2 2h10v16H2z" fill="#f5d36b" />
            <path d="M2 9h20v13H2z" fill="#f8e08e" />
            <path d="M8 22v-5l4-3 4 3v5z" fill="#2f9fe0" />
          </svg>
        </TaskIcon>
        <TaskIcon>
          <span className="relative font-['Liberation_Sans',sans-serif] text-[30px] font-bold leading-none text-[#2f8fe0]">e</span>
          <span className="absolute h-[12px] w-[30px] -rotate-[30deg] rounded-[50%] border-2 border-[#e8b83a]" />
        </TaskIcon>
        <TaskIcon active line className="w-[47px]">
          <svg viewBox="0 0 24 24" className="h-[26px] w-[26px]">
            <rect x="1" y="1" width="22" height="22" rx="2" fill="#ef8a1e" />
            <rect x="5" y="4" width="14" height="16" fill="#fde9b8" transform="rotate(6 12 12)" />
            <path d="M7 9h8M7 12h7M7 15h5" stroke="#b8691a" />
            <path d="M8 19L19 6" stroke="#c8401a" strokeWidth="1.800" />
          </svg>
        </TaskIcon>
        <TaskIcon line className="w-[47px]">
          <svg viewBox="0 0 24 24" className="h-[24px] w-[24px]">
            <rect width="24" height="24" rx="5" fill="#0a96e8" />
            <path d="M12 5v14M6 12h12M12 5a3 3 0 013 3M6 12a3 3 0 003 3M18 12a3 3 0 00-3-3M12 19a3 3 0 01-3-3" fill="none" stroke="#fff" strokeWidth="2" />
          </svg>
        </TaskIcon>
        <TaskIcon line className="w-[47px]">
          <span className="mb-[2px] ml-[10px] font-['Liberation_Sans',sans-serif] text-[22px] font-bold leading-none text-[#ffe600]">?</span>
          <span className="absolute left-[16px] top-[16px] h-[14px] w-[9px] bg-[#dcdcdc]" />
        </TaskIcon>
        <TaskIcon line className="w-[45px]">
          <span className="font-['Liberation_Sans',sans-serif] text-[27px] font-bold leading-none text-[#1e88e5]">G</span>
        </TaskIcon>
        <TaskIcon line className="w-[47px]">
          <span className="flex h-[22px] w-[22px] items-center justify-center rounded-full border-2 border-[#6cc04a] bg-white text-[15px] font-bold leading-none text-[#55b030]">e</span>
        </TaskIcon>
      </div>
      <div className="ml-[19px] flex w-[56px] shrink-0 flex-col items-center leading-[16px]">
        <span>31%</span>
        <span className="whitespace-nowrap">CPU使用</span>
      </div>
      <ChevronUp size={18} strokeWidth={1.500} className="ml-[12px]" />
      <svg viewBox="0 0 18 14" className="ml-[7px] h-[14px] w-[18px]">
        <rect x="5" y="4" width="12" height="8" fill="none" stroke="#fff" />
        <rect x="1" y="1" width="5" height="6" fill="#fff" />
      </svg>
      <svg viewBox="0 0 16 16" className="ml-[7px] h-[16px] w-[16px]">
        <path d="M1 15A14 14 0 0115 1M5 15A10 10 0 0115 5M9 15a6 6 0 016-6" fill="none" stroke="#aaa" strokeWidth="1.300" />
        <circle cx="14" cy="14" r="1.500" fill="#fff" />
      </svg>
      <svg viewBox="0 0 16 16" className="ml-[6px] h-[16px] w-[16px]">
        <path d="M1 6h3l4-4v12l-4-4H1z" fill="none" stroke="#fff" />
        <path d="M10.500 5a4 4 0 010 6M12.500 3a7 7 0 010 10" fill="none" stroke="#fff" />
      </svg>
      <svg viewBox="0 0 22 14" className="ml-[10px] h-[14px] w-[22px]">
        <rect x=".5" y=".5" width="21" height="13" fill="none" stroke="#fff" />
        <path d="M3 4h16M3 7h16M6 10.500h10" stroke="#fff" strokeDasharray="1.500 1" />
      </svg>
      <span className="ml-[10px] text-[14px] font-bold">中</span>
      <span className="ml-[14px] flex h-[16px] w-[15px] -rotate-12 items-center justify-center rounded-[3px] bg-[#f0501e] font-['Liberation_Sans',sans-serif] text-[13px] font-bold leading-none">S</span>
      <div className="ml-[11px] flex w-[70px] shrink-0 flex-col items-center leading-[19px]">
        <span>19:41</span>
        <span className="whitespace-nowrap">2017/10/25</span>
      </div>
      <div className="relative ml-[14px] h-[20px] w-[18px]">
        <svg viewBox="0 0 16 14" className="h-[14px] w-[16px]">
          <path d="M0 0h16v11H7l-2 3v-3H0z" fill="#fff" />
          <path d="M3 3h10M3 5.500h10M3 8h7" stroke="#333" />
        </svg>
        <span className="absolute left-[6px] top-[7px] flex h-[15px] w-[15px] items-center justify-center rounded-full bg-[#3a3a3a] text-[11px] font-bold leading-none text-white">2</span>
      </div>
    </div>
  );
}

function SogouBar() {
  return (
    <div className="absolute left-[570px] top-[21px] flex h-[27px] items-center">
      <span className="z-10 flex h-[24px] w-[26px] -rotate-12 items-center justify-center rounded-[5px] bg-[#f0501e] font-['Liberation_Sans',sans-serif] text-[21px] font-bold leading-none text-white">S</span>
      <div className="-ml-[1px] mt-[2px] flex h-[25px] w-[155px] items-center border border-[#cfe3f5] bg-white pl-[2px]">
        <span className="ml-[1px] text-[15px] font-bold leading-none text-[#1476d4]">中</span>
        <span className="ml-[5px] text-[13px] font-bold leading-none text-[#1476d4]">°,</span>
        <Mic size={17} strokeWidth={2.500} className="ml-[9px] text-[#1476d4]" />
        <svg viewBox="0 0 16 14" className="ml-[4px] h-[14px] w-[16px]">
          <rect width="16" height="14" rx="2" fill="#1476d4" />
          <path d="M2.500 4h11M2.500 7h11M4.500 10.500h7" stroke="#fff" strokeDasharray="1.500 1" />
        </svg>
        <svg viewBox="0 0 16 16" className="ml-[8px] h-[16px] w-[16px]">
          <circle cx="6" cy="4" r="3" fill="#b8c8d8" />
          <path d="M1 14c0-4 2-6 5-6s5 2 5 6z" fill="#b8c8d8" />
          <rect x="8" y="9" width="8" height="6" fill="#fff" stroke="#9aaabb" />
        </svg>
        <Shirt size={17} fill="#1476d4" className="ml-[3px] text-[#1476d4]" />
        <Wrench size={17} fill="#1476d4" className="ml-[5px] text-[#1476d4]" />
      </div>
    </div>
  );
}

function RedMarks() {
  return (
    <svg viewBox="0 0 1366 768" className="pointer-events-none absolute left-0 top-0 h-[768px] w-[1366px]">
      <ellipse cx="635.500" cy="191.500" rx="86" ry="45" fill="none" stroke="#ff0000" strokeWidth="7" />
      <ellipse cx="638.500" cy="281.500" rx="72" ry="38" fill="none" stroke="#ff0000" strokeWidth="7" />
    </svg>
  );
}

export default function App() {
  return (
    <div className="relative flex h-[768px] w-[1366px] flex-col overflow-hidden bg-[#f0f0f0] font-['Noto_Sans','Noto_Sans_CJK_SC',sans-serif]">
      <TitleBar />
      <MenuBar />
      <ToolbarOne />
      <div className="flex h-[630px] shrink-0">
        <LeftPanel />
        <div className="flex w-[1178px] shrink-0 flex-col">
          <ToolbarTwo />
          <UpperGrid />
          <BottomTabs />
          <div className="flex">
            <LowerGrid />
            <SidePanel />
          </div>
        </div>
      </div>
      <StatusBar />
      <Taskbar />
      <RedMarks />
      <SogouBar />
      <div className="absolute left-[985px] top-[-25px] flex h-[46px] w-[46px] items-end justify-center rounded-full border border-[#9fd09f] bg-gradient-to-b from-[#58c35a] to-[#3fae45] pb-[7px] text-[12px] font-bold leading-none text-white shadow-[0_2px_3px_rgba(0,0,0,0.4)]">
        71
      </div>
    </div>
  );
}
